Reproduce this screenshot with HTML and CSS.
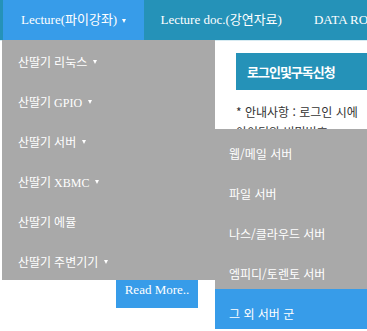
FILE: index.html
```html
<!DOCTYPE html>
<html lang="ko">
<head>
    <meta charset="UTF-8">
    <meta name="viewport" content="width=device-width, initial-scale=1.0">
    <link rel="stylesheet" href="styles.css">
    <title>산딸기 강좌</title>
</head>
<body>
    <nav class="main-nav">
        <ul class="menu">
            <li class="menu-item active">
                <a href="#">Lecture(파이강좌) <span class="caret"></span></a>
                <ul class="dropdown">
                    <li><a href="#">산딸기 리눅스 <span class="caret"></span></a></li>
                    <li><a href="#">산딸기 GPIO <span class="caret"></span></a></li>
                    <li class="has-sub">
                        <a href="#">산딸기 서버 <span class="caret"></span></a>
                        <ul class="submenu">
                            <li><a href="#">웹/메일 서버</a></li>
                            <li><a href="#">파일 서버</a></li>
                            <li><a href="#">나스/클라우드 서버</a></li>
                            <li><a href="#">엠피디/토렌토 서버</a></li>
                            <li class="current"><a href="#">그 외 서버 군</a></li>
                        </ul>
                    </li>
                    <li><a href="#">산딸기 XBMC <span class="caret"></span></a></li>
                    <li><a href="#">산딸기 에뮬</a></li>
                    <li><a href="#">산딸기 주변기기 <span class="caret"></span></a></li>
                </ul>
            </li>
            <li class="menu-item"><a href="#">Lecture doc.(강연자료)</a></li>
            <li class="menu-item"><a href="#">DATA ROOM(자료실)</a></li>
        </ul>
    </nav>
    <div class="page">
        <div class="content">
            <div class="post">
                <p class="excerpt">산딸기 파이 서버 강좌입니다.</p>
                <a href="#" class="read-more">Read More..</a>
            </div>
        </div>
        <aside class="sidebar">
            <div class="widget">
                <h3 class="widget-title">로그인및구독신청</h3>
                <p class="widget-text">* 안내사항 : 로그인 시에 아이디와 비밀번호</p>
            </div>
        </aside>
    </div>
</body>
</html>
```

FILE: styles.css
```css
html,
body {
    height: 100%;
}

body {
    margin: 0;
    padding: 0;
    font-family: "Liberation Serif", "Noto Sans CJK KR", serif;
    background-color: #fff;
    overflow: hidden;
}

ul {
    list-style: none;
    margin: 0;
    padding: 0;
}

a {
    color: #fff;
    text-decoration: none;
}

.main-nav {
    background-color: #2592b8;
    height: 40px;
    padding-left: 3px;
}

.menu {
    display: flex;
    white-space: nowrap;
}

.menu-item {
    position: relative;
    flex-shrink: 0;
}

.menu-item > a {
    display: block;
    height: 40px;
    line-height: 40px;
    padding: 0 18px;
    font-size: 13px;
}

.menu-item.active > a {
    background-color: #379ce9;
}

.menu-item + .menu-item > a {
    padding: 0 16px;
}

.caret {
    display: inline-block;
    width: 0;
    height: 0;
    margin-left: 2px;
    vertical-align: middle;
    border-left: 2.5px solid transparent;
    border-right: 2.5px solid transparent;
    border-top: 4px solid #fff;
}

.dropdown {
    position: absolute;
    top: 40px;
    left: -1px;
    width: 213px;
    background-color: #a9a9a9;
    z-index: 10;
}

.dropdown > li > a {
    display: flex;
    align-items: center;
    gap: 4px;
    box-sizing: border-box;
    height: 40px;
    padding: 4px 0 0 16px;
    font-size: 12px;
}

.has-sub {
    position: relative;
}

.submenu {
    position: absolute;
    top: 9px;
    left: 213px;
    width: 160px;
    background-color: #a9a9a9;
}

.submenu a {
    display: flex;
    align-items: center;
    box-sizing: border-box;
    height: 40px;
    padding: 8px 0 0 14px;
    font-family: "Noto Sans CJK KR", sans-serif;
    font-size: 12px;
}

.submenu .current a {
    background-color: #379ce9;
}

.page {
    display: flex;
    border-top: 1px solid #d7ebf2;
}

.content {
    width: 236px;
    flex-shrink: 0;
}

.post {
    padding: 188px 0 0 116px;
}

.excerpt {
    margin: 0 0 12px;
    font-size: 12px;
    color: #333;
}

.read-more {
    display: block;
    width: 82px;
    height: 31px;
    line-height: 26px;
    text-align: center;
    background-color: #379ce9;
    font-size: 13px;
}

.sidebar {
    width: 136px;
    flex-shrink: 0;
    padding-top: 12px;
}

.widget-title {
    margin: 0;
    height: 37px;
    line-height: 37px;
    padding-left: 11px;
    background-color: #2592b8;
    color: #fff;
    font-family: "Noto Sans CJK KR", sans-serif;
    font-size: 13px;
    font-weight: bold;
    letter-spacing: -1px;
    white-space: nowrap;
}

.widget-text {
    margin: 12px 0 0;
    font-family: "Noto Sans CJK KR", sans-serif;
    font-size: 12px;
    line-height: 20px;
    color: #333;
}
```
